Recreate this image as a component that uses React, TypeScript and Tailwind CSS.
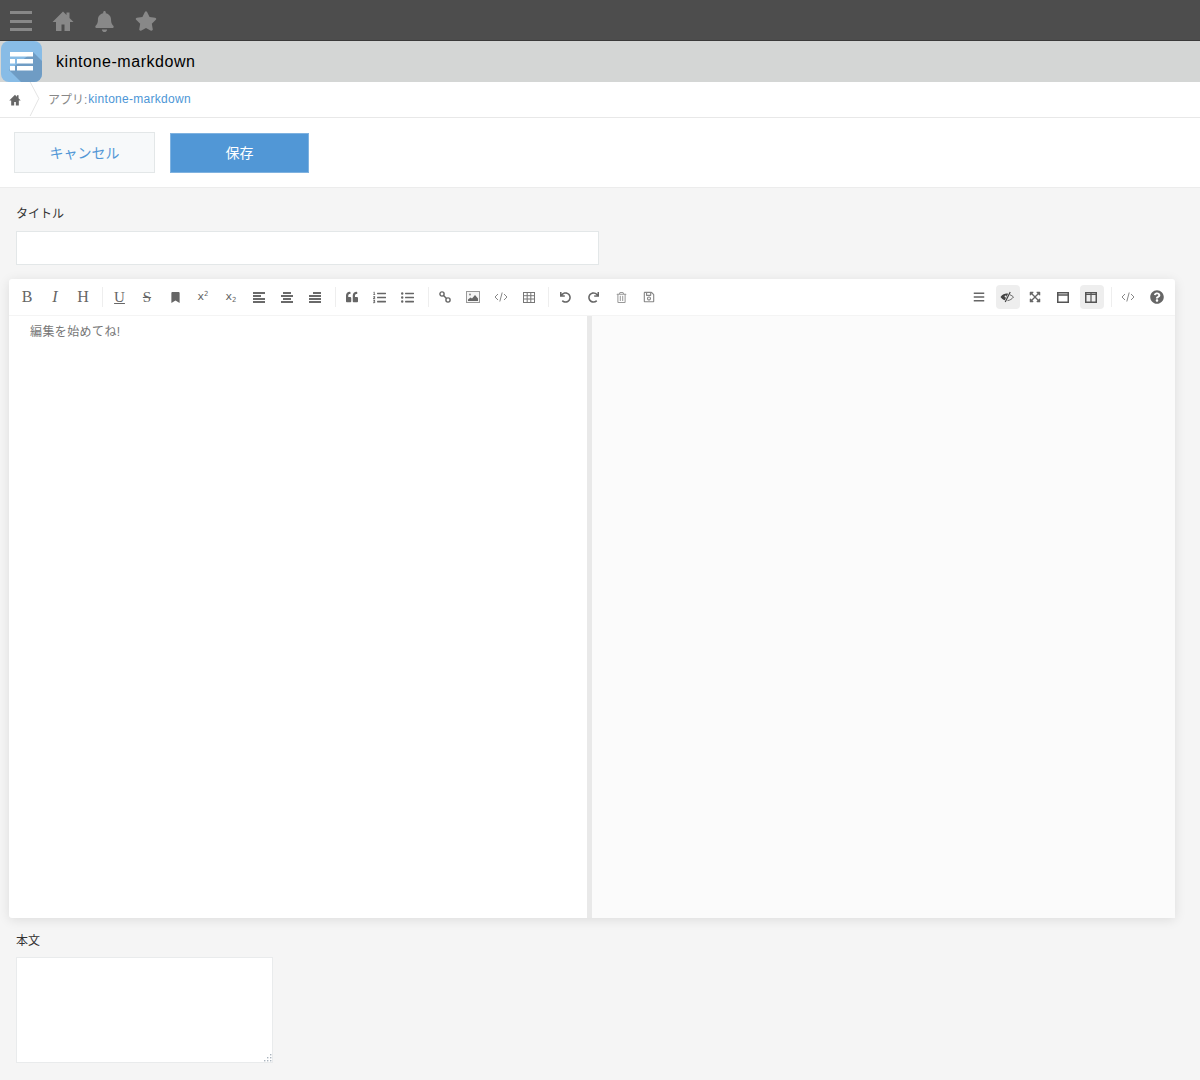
import type { ReactNode } from "react";
import {
  FaBell,
  FaBookmark,
  FaExpandArrowsAlt,
  FaBars,
  FaListOl,
  FaListUl,
  FaQuestionCircle,
  FaQuoteLeft,
  FaRedo,
  FaRegSave,
  FaRegTrashAlt,
  FaStar,
  FaUndo,
} from "react-icons/fa";

const jp = "font-['Liberation_Sans','Noto_Sans_CJK_JP',sans-serif]";
const serif = "font-['Liberation_Serif',serif] text-[#666]";
const sans = "font-['DejaVu_Sans',sans-serif] text-[#666]";

function Tool({ children, active }: { children: ReactNode; active?: boolean }) {
  return (
    <div className="flex h-6 w-7 items-center justify-center">
      <div className={`flex h-6 w-6 items-center justify-center rounded text-[#666] ${active ? "ml-[1px] bg-[#eee] pr-[2px]" : ""}`}>
        {children}
      </div>
    </div>
  );
}

function Sep({ width }: { width: string }) {
  return (
    <div className={`flex h-5 justify-end ${width}`}>
      <div className="mr-[2px] h-full w-px bg-[#eee]" />
    </div>
  );
}

function HouseIcon({ className }: { className?: string }) {
  return (
    <svg viewBox="0 0 22 22" className={className} fill="currentColor">
      <path d="M11 1.5 0.5 12H4v9h5.5v-6.5h3V21H18v-9h3.5L17.5 8V2.5h-3v2.5L13 3.5z" />
    </svg>
  );
}

function CodeIcon({ className }: { className?: string }) {
  return (
    <svg viewBox="0 0 14 12" className={className} fill="none" stroke="#888" strokeWidth="1">
      <path d="M4 3 1 6l3 3M10 3l3 3-3 3M8.2 1.5 5.8 10.5" />
    </svg>
  );
}

function LinkIcon() {
  return (
    <svg viewBox="0 0 12 12" className="h-3 w-3" fill="none" stroke="#666" strokeWidth="1.4">
      <circle cx="3" cy="3" r="2.1" />
      <circle cx="9" cy="9" r="2.1" />
      <path d="M4.5 4.5 7.5 7.5" />
    </svg>
  );
}

function ImageIcon() {
  return (
    <svg viewBox="0 0 14 12" className="h-[12px] w-[14px]">
      <rect x="0.5" y="0.5" width="13" height="11" fill="#f4f4f4" stroke="#999" />
      <path d="M2 10V8.5l2.5-2 1.5 1 3-3.5 3 3.5V10z" fill="#666" />
      <circle cx="4" cy="3.5" r="1" fill="#888" />
    </svg>
  );
}

function TableIcon() {
  return (
    <svg viewBox="0 0 12 11" className="h-[11px] w-[12px]" fill="none" stroke="#777" strokeWidth="1">
      <rect x="0.5" y="0.5" width="11" height="10" />
      <path d="M0.5 3.7h11M0.5 7h11M4.2 0.5v10M7.8 0.5v10" />
    </svg>
  );
}

function AlignIcon({ rows, align }: { rows: number[]; align: string }) {
  return (
    <div className={`flex h-[11px] w-[12px] flex-col justify-between ${align}`}>
      {rows.map((w, i) => (
        <div key={i} className="h-[2px] bg-[#6a6a6a]" style={{ width: w }} />
      ))}
    </div>
  );
}

function EyeIcon() {
  return (
    <svg viewBox="0 0 14 12" className="h-[12px] w-[14px]">
      <path d="M0.5 6C2.5 3.6 4.6 2.6 6.6 2.6c.5 0 1 .1 1.5.2L4.8 9.2C3 8.6 1.6 7.4 0.5 6z" fill="#444" />
      <path d="M10 3.8c1.4.5 2.5 1.3 3.5 2.2-1.5 2-3.5 3.3-6 3.6" fill="none" stroke="#666" strokeWidth="1" />
      <path d="M10.2 1 5.2 11" stroke="#444" strokeWidth="1.2" />
      <circle cx="5.6" cy="5.4" r="1" fill="#eee" />
    </svg>
  );
}

function WindowIcon() {
  return (
    <svg viewBox="0 0 12 11" className="h-[11px] w-[12px]" fill="none" stroke="#555">
      <rect x="0.75" y="0.75" width="10.5" height="9.5" strokeWidth="1.5" />
      <path d="M0.75 3h10.5" strokeWidth="1.5" />
    </svg>
  );
}

function ColumnsIcon() {
  return (
    <svg viewBox="0 0 12 11" className="h-[11px] w-[12px]" fill="none" stroke="#555">
      <rect x="0.75" y="0.75" width="10.5" height="9.5" strokeWidth="1.5" />
      <path d="M0.75 2.5h10.5" strokeWidth="1" />
      <path d="M6 1v9" strokeWidth="1.2" />
    </svg>
  );
}

function AppIcon() {
  return (
    <svg viewBox="0 0 41 41" className="h-[41px] w-[41px]">
      <rect width="41" height="41" rx="8" fill="#88bce6" />
      <path d="M8 29 32 11l9 9v13a8 8 0 0 1-8 8H20z" fill="#6f9cc4" />
      <g fill="#fff">
        <rect x="9" y="11" width="23" height="4.5" />
        <rect x="9" y="18" width="5" height="4.5" />
        <rect x="16" y="18" width="16" height="4.5" />
        <rect x="9" y="25" width="5" height="4.5" />
        <rect x="16" y="25" width="16" height="4.5" />
      </g>
    </svg>
  );
}

export default function App() {
  return (
    <div className={`min-h-[1080px] w-[1200px] overflow-hidden bg-[#f5f5f5] ${jp}`}>
      <div className="flex h-[41px] items-center border-b border-[#3a3a3a] bg-[#4d4d4d] pl-[10px] pt-[2px] text-[#888]">
        <div className="flex h-[22px] w-[22px] flex-col justify-between py-[1px]">
          <div className="h-[3px] bg-[#888]" />
          <div className="h-[3px] bg-[#888]" />
          <div className="h-[3px] bg-[#888]" />
        </div>
        <HouseIcon className="ml-[20px] h-[22px] w-[22px]" />
        <FaBell className="ml-[20px] h-[21px] w-[21px]" />
        <FaStar className="ml-[20px] h-[20px] w-[22px]" />
      </div>

      <div className="flex h-[41px] items-center bg-[#d4d6d5] pl-[1px]">
        <AppIcon />
        <span className="ml-[14px] pt-[1px] text-[16px] tracking-[0.55px] text-black">kintone-markdown</span>
      </div>

      <div className="flex h-[36px] items-center border-b border-[#e8e8e8] bg-white">
        <HouseIcon className="ml-[9px] h-[12px] w-[12px] text-[#666]" />
        <svg viewBox="0 0 12 36" className="ml-[8px] h-[35px] w-[12px]" fill="none" stroke="#e3e3e3">
          <path d="M1 0 10 17 1 35" />
        </svg>
        <span className="ml-[7px] text-[12px] text-[#888]">アプリ:</span>
        <span className="relative -top-[1px] ml-[1px] text-[12px] tracking-[0.28px] text-[#4d96d6]">kintone-markdown</span>
      </div>

      <div className="flex h-[70px] items-center border-b border-[#ececec] bg-white pl-[14px]">
        <div className="flex h-[41px] w-[141px] items-center justify-center border border-[#e3e7e8] bg-[#f7f9fa] pt-[2px] text-[14px] text-[#5197d6]">
          キャンセル
        </div>
        <div className="ml-[15px] flex h-[40px] w-[139px] items-center justify-center border border-[#7fb2e0] bg-[#5197d6] pt-[2px] text-[14px] text-white">
          保存
        </div>
      </div>

      <div className="pl-[16px] pt-[18px]">
        <div className="h-[16px] text-[12px] leading-4 text-[#333]">タイトル</div>
        <div className="mt-[9px] h-[34px] w-[583px] border border-[#e3e7e8] bg-white" />
      </div>

      <div className="ml-[9px] mt-[14px] flex h-[639px] w-[1166px] flex-col rounded-[3px] bg-white shadow-[0_2px_12px_rgba(0,0,0,0.1)]">
        <div className="flex h-[37px] shrink-0 items-center justify-between border-b border-[#f4f4f4] pl-1 pr-1">
          <div className="flex items-center">
            <Tool><span className={`${serif} text-[16px]`}>B</span></Tool>
            <Tool><span className={`${serif} text-[16px] italic`}>I</span></Tool>
            <Tool><span className={`${serif} text-[16px]`}>H</span></Tool>
            <Sep width="w-[8px]" />
            <Tool><span className={`${serif} ml-[1px] text-[15px] underline`}>U</span></Tool>
            <Tool><span className={`${serif} text-[15px] line-through`}>S</span></Tool>
            <Tool><FaBookmark className="h-[11px] w-[11px]" /></Tool>
            <Tool><span className={`${sans} text-[11px]`}>x<sup className="text-[7px]">2</sup></span></Tool>
            <Tool><span className={`${sans} text-[11px]`}>x<sub className="text-[7px]">2</sub></span></Tool>
            <Tool><AlignIcon rows={[12, 8, 12, 12]} align="items-start" /></Tool>
            <Tool><AlignIcon rows={[8, 12, 8, 12]} align="items-center" /></Tool>
            <Tool><AlignIcon rows={[8, 12, 12, 12]} align="items-end" /></Tool>
            <Sep width="w-[9px]" />
            <Tool><FaQuoteLeft className="h-[12px] w-[12px]" /></Tool>
            <Tool><FaListOl className="mr-[2px] h-[13px] w-[13px]" /></Tool>
            <Tool><FaListUl className="mr-[2px] h-[13px] w-[13px]" /></Tool>
            <Sep width="w-[9px]" />
            <Tool><LinkIcon /></Tool>
            <Tool><ImageIcon /></Tool>
            <Tool><CodeIcon className="h-[12px] w-[14px]" /></Tool>
            <Tool><TableIcon /></Tool>
            <Sep width="w-[8px]" />
            <Tool><FaUndo className="h-[11px] w-[11px]" /></Tool>
            <Tool><FaRedo className="h-[11px] w-[11px]" /></Tool>
            <Tool><FaRegTrashAlt className="h-[11px] w-[11px] text-[#999]" /></Tool>
            <Tool><FaRegSave className="h-[12px] w-[12px] text-[#888]" /></Tool>
          </div>
          <div className="flex items-center">
            <Tool><FaBars className="h-[12px] w-[12px]" /></Tool>
            <Tool active><EyeIcon /></Tool>
            <Tool><FaExpandArrowsAlt className="h-[12px] w-[12px]" /></Tool>
            <Tool><WindowIcon /></Tool>
            <Tool active><ColumnsIcon /></Tool>
            <Sep width="w-[9px]" />
            <Tool><CodeIcon className="h-[12px] w-[14px]" /></Tool>
            <div className="ml-[1px]">
              <Tool><FaQuestionCircle className="h-[14px] w-[14px]" /></Tool>
            </div>
          </div>
        </div>
        <div className="flex min-h-0 flex-1">
          <div className="w-[578px] pl-[21px] pt-[7px] text-[12px] leading-4 tracking-[0.4px] text-[#777]">
            <span className="relative top-[1px]">編集を始めてね!</span>
          </div>
          <div className="flex-1 border-l-[5px] border-[#e9e9e9] bg-[#fbfbfb]" />
        </div>
      </div>

      <div className="pl-[16px] pt-[15px]">
        <div className="h-[15px] text-[12px] leading-4 text-[#333]">本文</div>
        <div className="relative mt-[9px] h-[106px] w-[257px] border border-[#e9ebec] bg-white">
          <svg viewBox="0 0 9 9" className="absolute bottom-0 right-0 h-[9px] w-[9px]" fill="#aab4bd">
            <rect x="7" y="1" width="1.4" height="1.4" />
            <rect x="4" y="4" width="1.4" height="1.4" />
            <rect x="7" y="4" width="1.4" height="1.4" />
            <rect x="1" y="7" width="1.4" height="1.4" />
            <rect x="4" y="7" width="1.4" height="1.4" />
            <rect x="7" y="7" width="1.4" height="1.4" />
          </svg>
        </div>
      </div>
    </div>
  );
}
